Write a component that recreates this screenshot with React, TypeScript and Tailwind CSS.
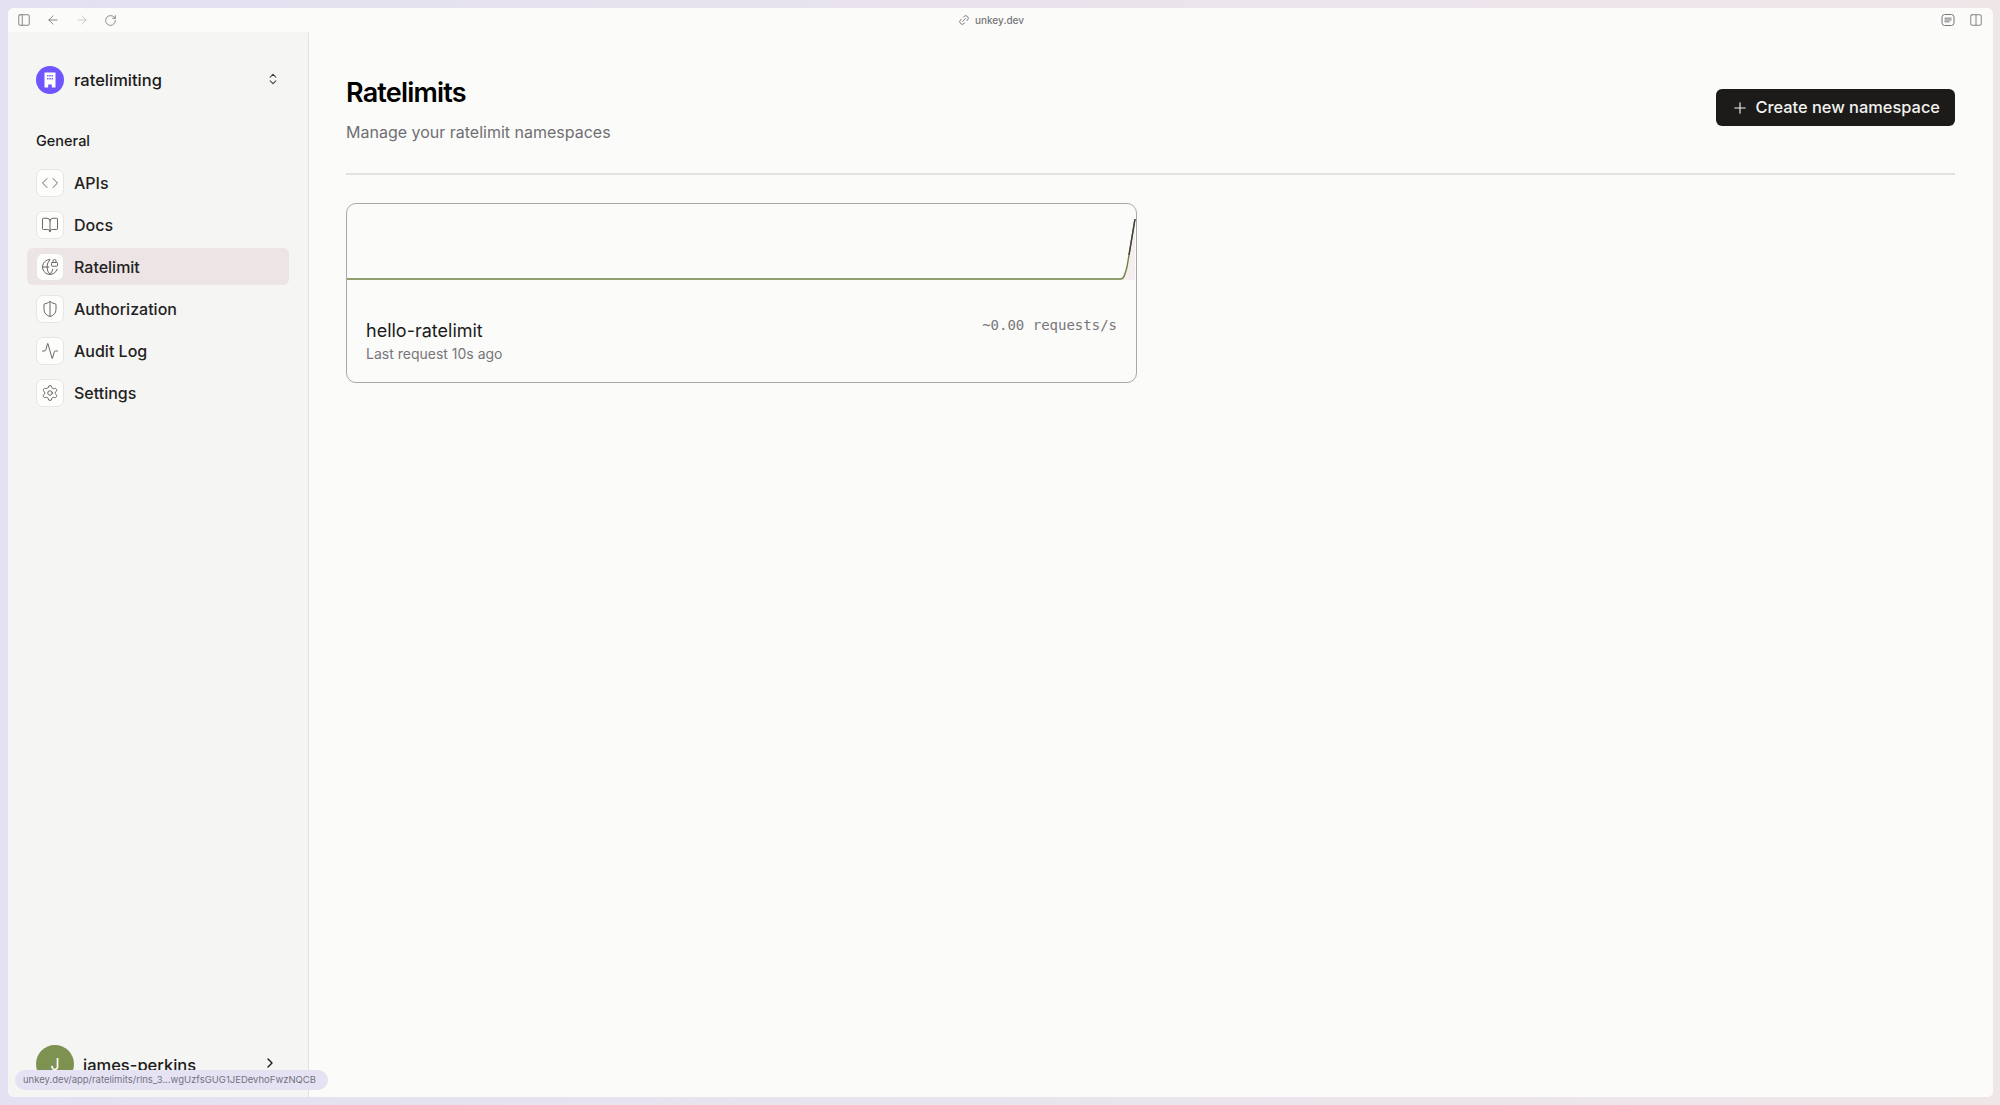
import { Activity, ArrowLeft, ArrowRight, BookOpen, ChevronRight, ChevronsUpDown, Code, Columns2, GlobeLock, Link2, PanelLeft, Plus, RotateCw, Settings, ShieldHalf } from 'lucide-react'

const navItems = [
  { label: 'APIs', icon: Code },
  { label: 'Docs', icon: BookOpen },
  { label: 'Ratelimit', icon: GlobeLock, active: true },
  { label: 'Authorization', icon: ShieldHalf },
  { label: 'Audit Log', icon: Activity },
  { label: 'Settings', icon: Settings },
]

function TopBar() {
  return (
    <div className="relative flex h-6 shrink-0 items-center bg-[#fbfbf9] pl-[9px] pr-[10px] text-[#77767a]">
      <PanelLeft size={14} strokeWidth={1.5} />
      <ArrowLeft size={14} strokeWidth={1.5} className="ml-[15px]" />
      <ArrowRight size={14} strokeWidth={1.5} className="ml-[15px] text-[#c4c4c4]" />
      <RotateCw size={13} strokeWidth={1.5} className="ml-[15px]" />
      <div className="flex flex-1 items-center justify-center gap-[5px] pr-[76px] text-[10px] font-medium">
        <Link2 size={12} strokeWidth={1.75} className="-rotate-45" />
        <span>unkey.dev</span>
      </div>
      <svg width="14" height="14" viewBox="0 0 14 14" fill="none" stroke="currentColor" strokeWidth="1">
        <rect x="1" y="1.5" width="12" height="11" rx="2.5" />
        <path d="M3.5 5.2h7M3.5 7h7M3.5 8.8h5" />
      </svg>
      <Columns2 size={14} strokeWidth={1.5} className="ml-[14px]" />
    </div>
  )
}

function Sidebar() {
  return (
    <aside className="flex w-[301px] shrink-0 flex-col overflow-hidden rounded-tr-[2px] border-r border-[#e4e0e0] bg-[#f5f5f4]">
      <div className="flex items-center pl-[28px] pr-[28px] pt-[34px]">
        <div className="flex h-7 w-7 items-center justify-center rounded-full bg-[#6e56ff]">
          <svg width="16" height="18" viewBox="0 0 16 18" fill="#ffffff">
            <path d="M2.5 1.5h11v15H9.8v-3H6.2v3H2.5z" />
            <path fill="#6e56ff" d="M5.1 4h1.4v1.4H5.1zM7.3 4h1.4v1.4H7.3zM9.5 4h1.4v1.4H9.5zM5.1 7h1.4v1.4H5.1zM7.3 7h1.4v1.4H7.3zM9.5 7h1.4v1.4H9.5z" />
          </svg>
        </div>
        <span className="ml-[10px] flex-1 text-[16.5px] font-medium text-[#1c1b1a]">ratelimiting</span>
        <ChevronsUpDown size={14} strokeWidth={1.75} className="-mt-[2px] text-[#333333]" />
      </div>

      <div className="pl-[28px] pt-[37px] text-[14.5px] font-medium leading-[20px] text-[#1c1b1a]">General</div>

      <nav className="flex flex-col gap-[5px] px-[19px] pt-[13px]">
        {navItems.map(({ label, icon: Icon, active }) => (
          <div
            key={label}
            className={active ? 'flex h-[37px] items-center rounded-[6px] bg-[#ece4e5] pl-[9px]' : 'flex h-[37px] items-center rounded-[6px] pl-[9px]'}
          >
            <div className="flex h-7 w-7 items-center justify-center rounded-[7px] border border-[#e9e5e5] bg-[#fdfdfc] text-[#5f5f5f]">
              <Icon size={18} strokeWidth={1.25} />
            </div>
            <span className="ml-[10px] text-[16px] font-medium text-[#232221]">{label}</span>
          </div>
        ))}
      </nav>

      <div className="mt-auto flex h-[52px] shrink-0 items-start pl-[28px] pr-[30px]">
        <div className="flex h-[38px] w-[38px] items-center justify-center rounded-full bg-[#7d9150] text-[16px] text-white">J</div>
        <span className="ml-[9px] mt-[8px] flex-1 text-[16.5px] font-medium text-[#1c1b1a]">james-perkins</span>
        <ChevronRight size={16} strokeWidth={2} className="mt-[10px] text-[#1c1b1a]" />
      </div>
    </aside>
  )
}

function NamespaceCard() {
  return (
    <div className="w-[791px] overflow-hidden rounded-[10px] border border-[#a8a8a6] bg-[#fbfbf9]">
      <svg width="789" height="101" viewBox="0 0 789 101" className="block">
        <path d="M0 75H774C777 75 778 70 780 63L788 15V76H0Z" fill="#f6eeee" />
        <path d="M0 75H774C777 75 778 70 780 63L788 15" fill="none" stroke="#6f8345" strokeWidth="1.4" />
        <path d="M782 51L788 15" fill="none" stroke="#3f3f3a" strokeWidth="1.4" />
      </svg>
      <div className="flex items-start justify-between px-[19px] pb-[20px] pt-[12px]">
        <div>
          <div className="text-[18px] leading-[28px] text-[#1c1b1a]">hello-ratelimit</div>
          <div className="text-[14px] leading-[17px] text-[#77767a]">Last request 10s ago</div>
        </div>
        <div className="mt-[-6px] font-['DejaVu_Sans_Mono',monospace] text-[14px] leading-[28px] text-[#77767a]">~0.00 requests/s</div>
      </div>
    </div>
  )
}

function Main() {
  return (
    <main className="flex-1 bg-[#fbfbf9] pl-[37px] pr-[38px] pt-[43px]">
      <div className="flex items-start justify-between border-b-2 border-[#e4e0e1] pb-[29px]">
        <div>
          <h1 className="text-[27px] font-semibold leading-[36px] tracking-[-0.03em] text-black">Ratelimits</h1>
          <p className="mt-[9px] text-[16px] leading-[24px] text-[#6f6f73]">Manage your ratelimit namespaces</p>
        </div>
        <button className="mt-[14px] flex h-[37px] items-center gap-[6px] rounded-[6px] bg-[#1c1b1a] pl-[15px] pr-[15px] text-[16.4px] font-medium text-[#f2f2f0]">
          <Plus size={18} strokeWidth={1.5} />
          Create new namespace
        </button>
      </div>
      <div className="pt-[28px]">
        <NamespaceCard />
      </div>
    </main>
  )
}

export default function App() {
  return (
    <div className="relative flex h-[1105px] w-[2000px] flex-col bg-gradient-to-r from-[#e3e1f2] to-[#efe6e8] pb-[8px] pl-[8px] pr-[7px] pt-[8px] font-['Inter',sans-serif]">
      <div className="flex min-h-0 flex-1 flex-col overflow-hidden rounded-[6px] bg-[#fbfbf9]">
        <TopBar />
        <div className="flex min-h-0 flex-1">
          <Sidebar />
          <Main />
        </div>
      </div>
      <div className="absolute left-[15px] top-[1070px] flex h-[20px] w-[313px] items-center rounded-full bg-[#e5e3f3] pl-[8px] text-[9.5px] text-[#73727e]">
        unkey.dev/app/ratelimits/rlns_3...wgUzfsGUG1JEDevhoFwzNQCB
      </div>
    </div>
  )
}
